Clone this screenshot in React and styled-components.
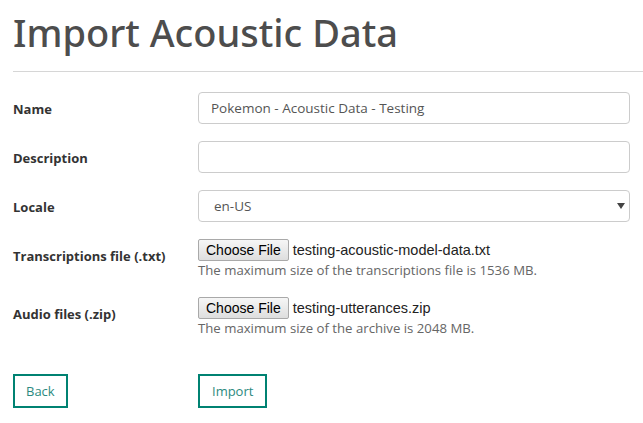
import React from "react";
import styled, { createGlobalStyle } from "styled-components";

const GlobalStyle = createGlobalStyle`
  body {
    margin: 0;
    background: #fff;
    font-family: "Open Sans", "Noto Sans", sans-serif;
    color: #333;
  }
`;

const Page = styled.div`
  padding: 0 0 0 13px;
  overflow: hidden;
`;

const Title = styled.h1`
  margin: 0;
  padding: 6px 0 0 0;
  height: 65px;
  font-family: "Noto Sans", "Open Sans", sans-serif;
  font-size: 38px;
  font-weight: 500;
  line-height: 53px;
  color: #4d4d4d;
  border-bottom: 1px solid #d6d6d6;
`;

const Form = styled.form`
  display: grid;
  grid-template-columns: 185px 432px;
  row-gap: 17px;
  align-items: start;
  margin-top: 20px;
`;

const Label = styled.label`
  padding-top: 7px;
  font-size: 13px;
  font-weight: 700;
  line-height: 20px;
  color: #333;
`;

const TextInput = styled.input`
  box-sizing: border-box;
  width: 100%;
  height: 32px;
  padding: 0 12px;
  border: 1px solid #ccc;
  border-radius: 4px;
  font-family: inherit;
  font-size: 13.5px;
  color: #555;
  outline: none;
`;

const SelectWrap = styled.div`
  position: relative;
`;

const Select = styled.select`
  box-sizing: border-box;
  width: 100%;
  height: 32px;
  padding: 0 15px;
  border: 1px solid #ccc;
  border-radius: 4px;
  font-family: inherit;
  font-size: 13.5px;
  color: #555;
  background: #fff;
  appearance: none;
  outline: none;
`;

const Arrow = styled.svg`
  position: absolute;
  right: 5px;
  top: 13px;
  pointer-events: none;
`;

const FileField = styled.div`
  display: flex;
  flex-direction: column;
`;

const FileRow = styled.div`
  display: flex;
  align-items: center;
  gap: 4px;
  height: 22px;
`;

const FileButton = styled.button`
  box-sizing: border-box;
  height: 22px;
  padding: 0 7px;
  border: 1px solid #a9a9a9;
  border-radius: 2px;
  background: linear-gradient(#f6f6f6, #dedede);
  font-family: "Liberation Sans", Arial, sans-serif;
  font-size: 14px;
  color: #000;
`;

const FileName = styled.span`
  font-family: "Liberation Sans", Arial, sans-serif;
  font-size: 14.5px;
  color: #222;
`;

const Help = styled.div`
  font-size: 13.2px;
  line-height: 19px;
  color: #666;
`;

const Actions = styled.div`
  display: grid;
  grid-template-columns: 185px auto;
  margin-top: 36px;
  justify-items: start;
`;

const Button = styled.button`
  box-sizing: border-box;
  height: 34px;
  padding: 0 ${(p) => p.$pad}px;
  border: 2px solid #008272;
  background: #fff;
  font-family: inherit;
  font-size: 13px;
  color: #2c8a80;
  cursor: pointer;
`;

export default function App() {
  return (
    <Page>
      <GlobalStyle />
      <Title>Import Acoustic Data</Title>
      <Form>
        <Label>Name</Label>
        <TextInput defaultValue="Pokemon - Acoustic Data - Testing" />

        <Label>Description</Label>
        <TextInput defaultValue="" />

        <Label>Locale</Label>
        <SelectWrap>
          <Select defaultValue="en-US">
            <option>en-US</option>
          </Select>
          <Arrow width="8" height="6" viewBox="0 0 8 6">
            <path d="M0 0 H8 L4 6 Z" fill="#444" />
          </Arrow>
        </SelectWrap>

        <Label>Transcriptions file (.txt)</Label>
        <FileField>
          <FileRow>
            <FileButton type="button">Choose File</FileButton>
            <FileName>testing-acoustic-model-data.txt</FileName>
          </FileRow>
          <Help>The maximum size of the transcriptions file is 1536 MB.</Help>
        </FileField>

        <Label>Audio files (.zip)</Label>
        <FileField>
          <FileRow>
            <FileButton type="button">Choose File</FileButton>
            <FileName>testing-utterances.zip</FileName>
          </FileRow>
          <Help>The maximum size of the archive is 2048 MB.</Help>
        </FileField>
      </Form>
      <Actions>
        <Button type="button" $pad={11}>Back</Button>
        <Button type="button" $pad={12}>Import</Button>
      </Actions>
    </Page>
  );
}
